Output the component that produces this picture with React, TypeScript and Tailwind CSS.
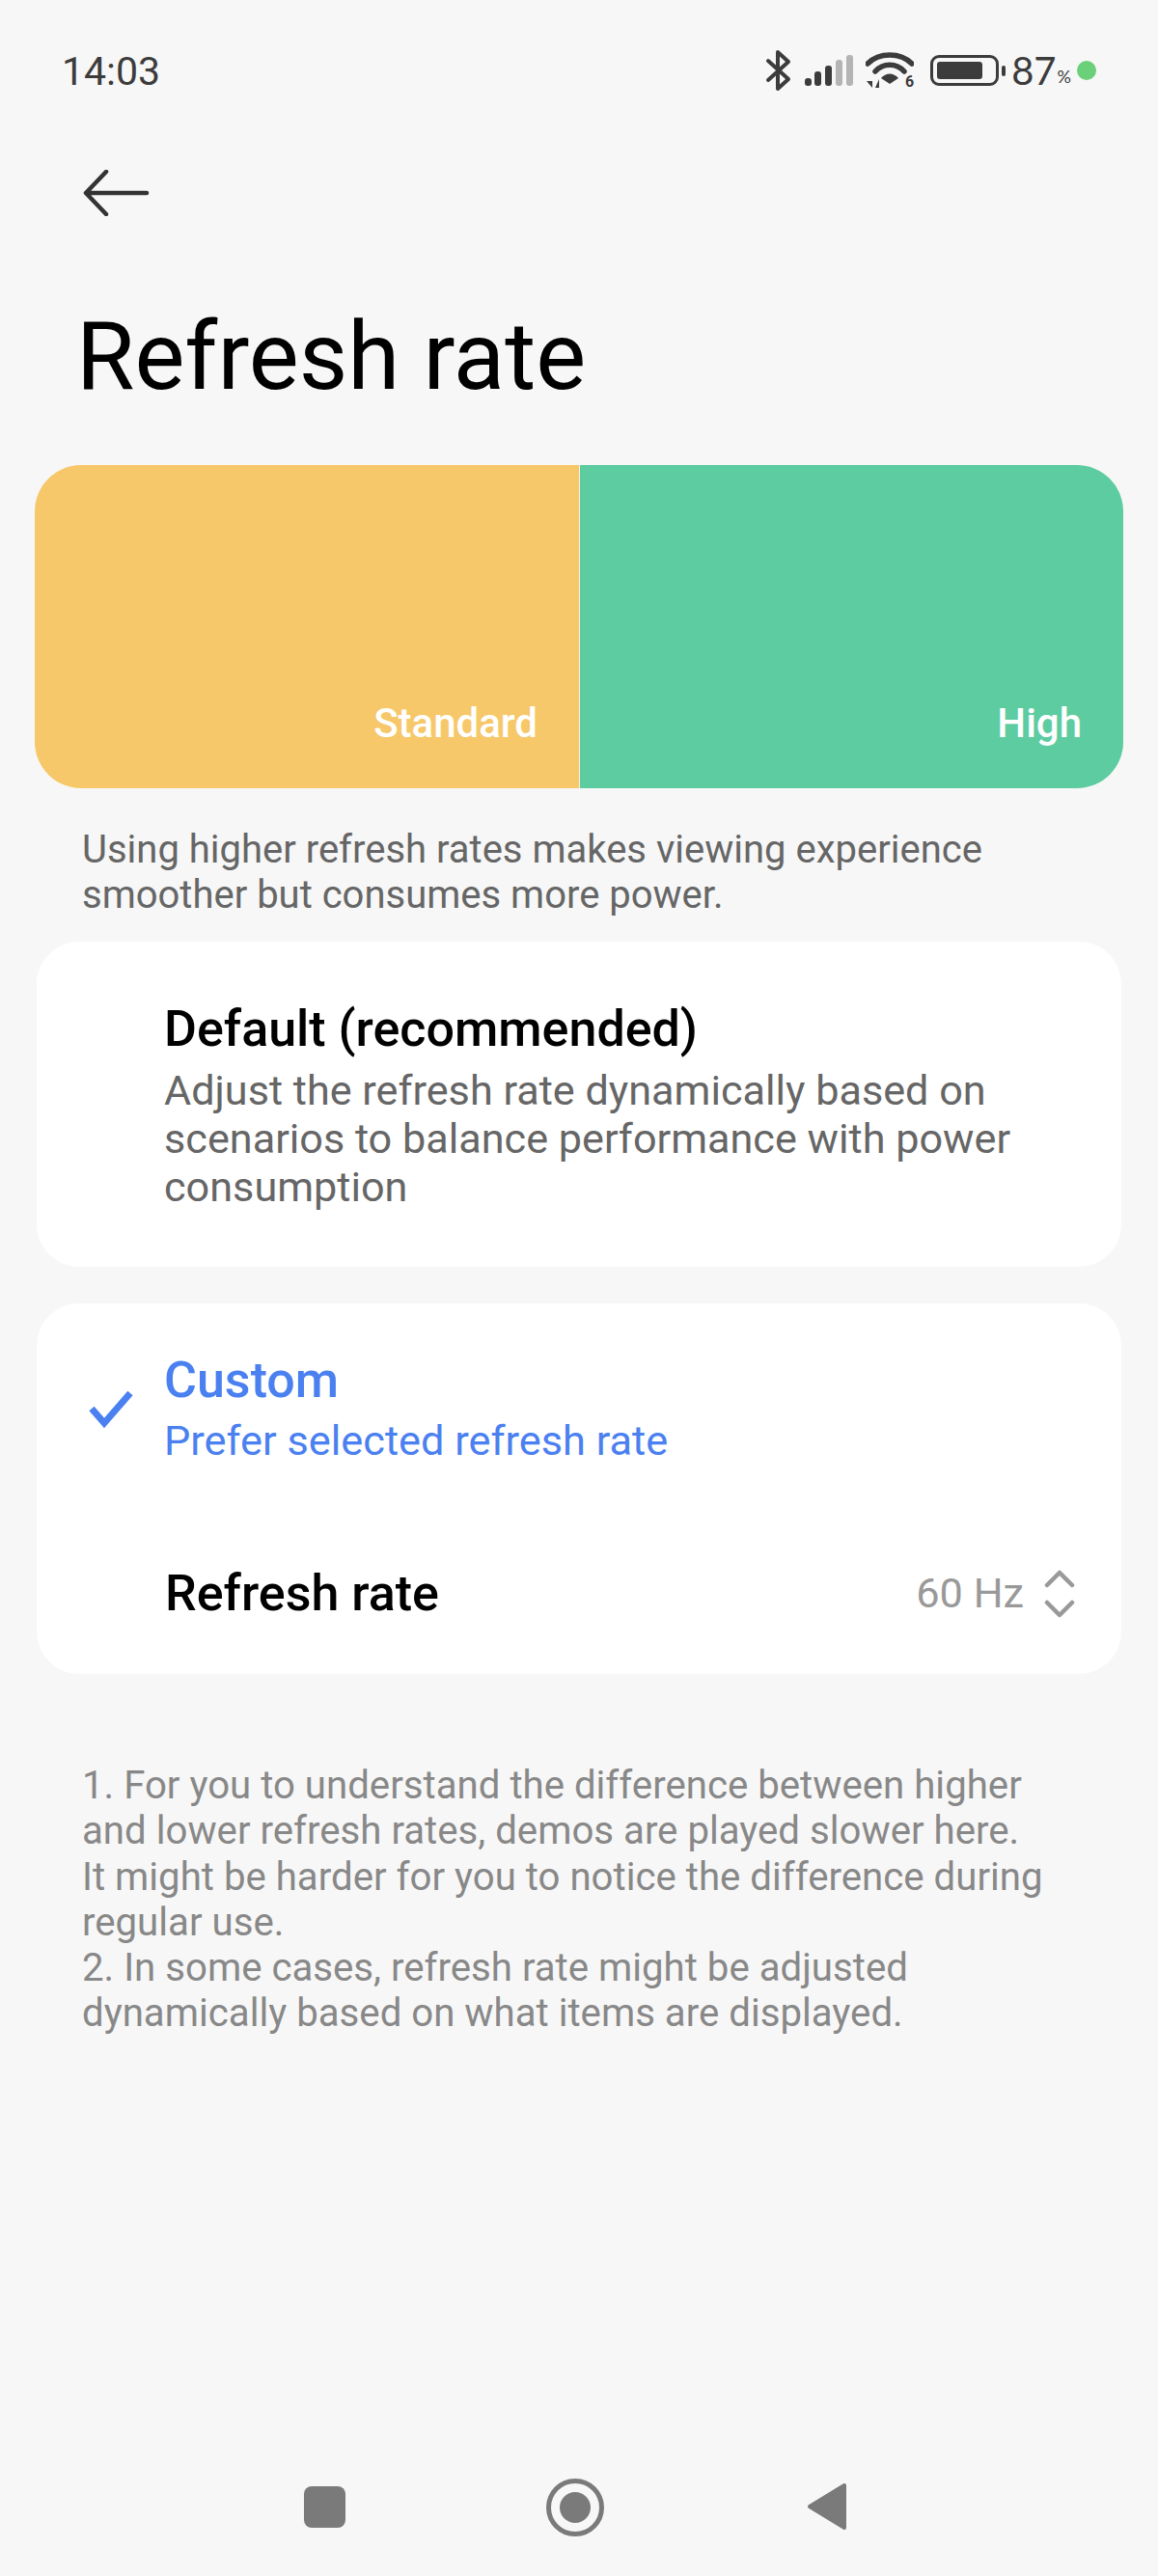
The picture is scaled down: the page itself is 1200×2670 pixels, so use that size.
import React from 'react';

const BluetoothIcon = () => (
    <svg width="28" height="44" viewBox="0 0 28 44" fill="none" stroke="#3c3c3c" strokeWidth="4" strokeLinecap="round" strokeLinejoin="round">
        <path d="M3 12 L24 31 L13 41 V3 L24 13 L3 32" />
    </svg>
);

const SignalIcon = () => (
    <svg width="50" height="32" viewBox="0 0 50 32">
        <rect x="0" y="24" width="7" height="8" rx="3" fill="#3c3c3c" />
        <rect x="10" y="17" width="7" height="15" rx="3" fill="#3c3c3c" />
        <rect x="21" y="11" width="7" height="21" rx="3" fill="#3c3c3c" />
        <rect x="32" y="5" width="7" height="27" rx="3" fill="#b4b4b4" />
        <rect x="43" y="0" width="7" height="32" rx="3" fill="#b4b4b4" />
    </svg>
);

const WifiIcon = () => (
    <div className="relative w-[50px] h-[38px]">
        <svg width="50" height="38" viewBox="0 0 50 38" fill="none">
            <path d="M2 12 C14 0 36 0 48 12" stroke="#3c3c3c" strokeWidth="5.5" strokeLinecap="round" />
            <path d="M10 20 C18 11 32 11 40 20" stroke="#3c3c3c" strokeWidth="5.5" strokeLinecap="round" />
            <path d="M16 27 C21 21 29 21 34 27 L25 33 Z" fill="#3c3c3c" />
            <path d="M1 30 H7 V37 Z M10 37 H14 V28 Z" fill="#3c3c3c" />
        </svg>
        <span className="absolute right-0 bottom-0 text-[16px] leading-[14px] font-bold text-[#3c3c3c]">6</span>
    </div>
);

const BatteryIcon = () => (
    <div className="flex items-center gap-[3px]">
        <div className="w-[71px] h-[32px] rounded-[9px] border-[3px] border-[#3c3c3c] p-[4px]">
            <div className="w-[47px] h-full bg-[#3c3c3c] rounded-[3px]" />
        </div>
        <div className="w-[4px] h-[11px] bg-[#3c3c3c] rounded-[2px]" />
    </div>
);

const StatusBar = () => (
    <div className="h-[146px] pl-[64px] pr-[64px] flex items-center justify-between text-[#3c3c3c]">
        <span className="text-[41px] leading-none mt-[2px]">14:03</span>
        <div className="flex items-center">
            <BluetoothIcon />
            <div className="w-[13px]" />
            <SignalIcon />
            <div className="w-[13px]" />
            <WifiIcon />
            <div className="w-[17px]" />
            <BatteryIcon />
            <div className="w-[6px]" />
            <span className="text-[40px] leading-none font-['Lato',sans-serif]">87</span>
            <span className="text-[18px] leading-none mt-[12px] ml-[1px] font-['Lato',sans-serif]">%</span>
            <div className="w-[20px] h-[20px] rounded-full bg-[#6bd07a] ml-[6px]" />
        </div>
    </div>
);

const NavBar = () => (
    <div className="mt-auto h-[100px] flex items-start pl-[315px]">
        <div className="w-[43px] h-[43px] mt-[7px] rounded-[8px] bg-[#7a7a7a]" />
        <div className="w-[60px] h-[60px] -mt-[1px] ml-[208px] rounded-full border-[5px] border-[#7a7a7a] flex items-center justify-center">
            <div className="w-[32px] h-[32px] rounded-full bg-[#7a7a7a]" />
        </div>
        <svg className="ml-[210px] mt-[3px]" width="42" height="50" viewBox="0 0 42 50">
            <path d="M39 3 V47 L3 25 Z" fill="#7a7a7a" stroke="#7a7a7a" strokeWidth="4" strokeLinejoin="round" />
        </svg>
    </div>
);

export default function App() {
    return (
        <div className="w-[1200px] h-[2670px] bg-[#f7f7f7] flex flex-col font-['Roboto',sans-serif]">
            <StatusBar />

            <div className="h-[138px] pl-[86px] pt-[30px] flex items-start">
                <svg width="70" height="48" viewBox="0 0 70 48" fill="none" stroke="#333333" strokeWidth="4.5" strokeLinecap="round" strokeLinejoin="round">
                    <path d="M24 2 L3 24 L24 46 M3 24 H66" />
                </svg>
            </div>

            <h1 className="pl-[79px] pt-[30px] text-[98px] leading-[112px] text-black">Refresh rate</h1>

            <div className="mx-[36px] mt-[56px] h-[335px] rounded-[48px] overflow-hidden flex">
                <div className="w-[564px] bg-[#f6c86a] flex items-end justify-end pr-[43px] pb-[44px]">
                    <span className="text-[42px] leading-[47px] font-medium text-white">Standard</span>
                </div>
                <div className="w-[1px] bg-[#f3f3e8]" />
                <div className="flex-1 bg-[#5ecca1] flex items-end justify-end pr-[43px] pb-[44px]">
                    <span className="text-[42px] leading-[47px] font-medium text-white">High</span>
                </div>
            </div>

            <p className="mt-[40px] pl-[85px] text-[40px] leading-[47px] text-[#666666]">
                Using higher refresh rates makes viewing experience<br />
                smoother but consumes more power.
            </p>

            <div className="mx-[38px] mt-[25px] h-[337px] rounded-[44px] bg-white pl-[132px] pt-[63px]">
                <h2 className="text-[52px] leading-[56px] font-medium text-black">Default (recommended)</h2>
                <p className="mt-[11px] text-[43.2px] leading-[50px] text-[#666666]">
                    Adjust the refresh rate dynamically based on<br />
                    scenarios to balance performance with power<br />
                    consumption
                </p>
            </div>

            <div className="mx-[38px] mt-[38px] h-[384px] rounded-[44px] bg-white">
                <div className="flex items-center pl-[54px] pt-[52px]">
                    <svg width="46" height="40" viewBox="0 0 46 40" fill="none" stroke="#4a80f0" strokeWidth="7" strokeLinejoin="miter">
                        <path d="M3 19 L16 34 L43 3" />
                    </svg>
                    <div className="ml-[32px]">
                        <div className="text-[52px] leading-[56px] font-medium text-[#4a80f0]">Custom</div>
                        <div className="mt-[10px] text-[43.3px] leading-[50px] text-[#4a80f0]">Prefer selected refresh rate</div>
                    </div>
                </div>
                <div className="flex items-center justify-between pl-[133px] pr-[48px] mt-[105px]">
                    <span className="text-[52px] leading-[56px] font-medium text-black">Refresh rate</span>
                    <div className="flex items-center">
                        <span className="text-[43.3px] leading-[50px] text-[#999999]">60 Hz</span>
                        <svg className="ml-[21px]" width="32" height="50" viewBox="0 0 32 50" fill="none" stroke="#999999" strokeWidth="4.5" strokeLinecap="round" strokeLinejoin="round">
                            <path d="M3 16 L16 3 L29 16 M3 34 L16 47 L29 34" />
                        </svg>
                    </div>
                </div>
            </div>

            <p className="mt-[92px] pl-[85px] text-[40.2px] leading-[47.3px] text-[#888888]">
                1. For you to understand the difference between higher<br />
                and lower refresh rates, demos are played slower here.<br />
                It might be harder for you to notice the difference during<br />
                regular use.<br />
                2. In some cases, refresh rate might be adjusted<br />
                dynamically based on what items are displayed.
            </p>

            <NavBar />
        </div>
    );
}
